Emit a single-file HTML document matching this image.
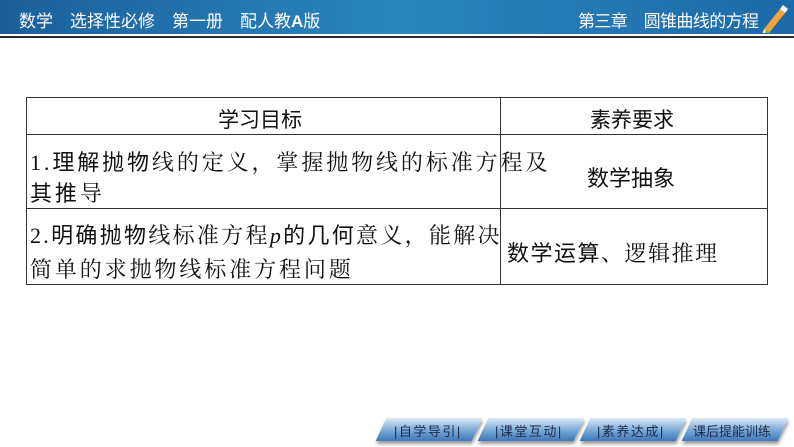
<!DOCTYPE html>
<html><head><meta charset="utf-8"><style>
*{margin:0;padding:0;box-sizing:border-box}
body{width:794px;height:447px;background:#fff;position:relative;overflow:hidden;font-family:"Liberation Serif","Noto Serif CJK SC",serif;color:#111}
.bar{position:absolute;left:0;top:0;width:794px;height:34px;background:linear-gradient(90deg,#1a5f9c,#2a86bf 50%,#1c6aa8)}
.l2{position:absolute;left:0;top:36px;width:794px;height:2px;background:#2a2a2a}
.ht{position:absolute;top:7px;color:#fff;font-family:"Liberation Sans","Noto Sans CJK SC",sans-serif;font-size:17px;white-space:nowrap}
.t{position:absolute;white-space:nowrap}
.s{font-family:"Liberation Sans","Noto Sans CJK SC",sans-serif;font-weight:normal}
.h{position:absolute;background:#333}
.btn{position:absolute;top:418px;height:23px;width:96px;transform:skewX(-25deg);background:linear-gradient(#dbe9f6,#6fa2d3 60%,#3d78b8);box-shadow:2px 3px 3px #999}
.bt{position:absolute;top:421px;font-family:"Liberation Sans","Noto Sans CJK SC",sans-serif;font-size:13px;color:#1a2a4a;white-space:nowrap;letter-spacing:1.5px}
</style></head><body>
<div class="bar"></div><div class="l2"></div>
<div class="ht" style="left:19px">数学　选择性必修　第一册　配人教<b>A</b>版</div>
<div class="ht" style="left:578px;letter-spacing:-0.6px">第三章　圆锥曲线的方程</div>
<svg style="position:absolute;left:760px;top:3px" width="28" height="30" viewBox="0 0 28 30">
<path d="M4 26 L20 6 L25 10 L9 30 Z" fill="#f2a33a"/><path d="M20 6 L23 2 L28 6 L25 10Z" fill="#fff"/><path d="M4 26 L9 30 L2 31Z" fill="#f5e3c0"/><path d="M6 28 L9 30" stroke="#7ab648" stroke-width="3"/></svg>
<div class="h" style="left:26px;top:97px;width:742px;height:1px"></div>
<div class="h" style="left:26px;top:134px;width:742px;height:1px"></div>
<div class="h" style="left:26px;top:208px;width:742px;height:1px"></div>
<div class="h" style="left:26px;top:284px;width:742px;height:1px"></div>
<div class="h" style="left:26px;top:97px;width:1px;height:188px"></div>
<div class="h" style="left:500px;top:97px;width:1px;height:188px"></div>
<div class="h" style="left:767px;top:97px;width:1px;height:188px"></div>
<div class="t s" style="left:218px;top:104px;font-size:21px">学习目标</div>
<div class="t s" style="left:590px;top:104px;font-size:21px">素养要求</div>
<div class="t" style="left:30px;top:145px;font-size:22px;letter-spacing:2.9px">1.<span class="s">理解抛物</span>线的定义，掌握抛物线的标准方程及</div>
<div class="t" style="left:30px;top:176px;font-size:22px;letter-spacing:2.9px"><span class="s">其推</span>导</div>
<div class="t s" style="left:587px;top:161px;font-size:22px">数学抽象</div>
<div class="t" style="left:30px;top:218px;font-size:22px;letter-spacing:2.3px">2.<span class="s">明确抛物</span>线标准方程<i>p</i><span class="s">的几何</span>意义，能解决</div>
<div class="t" style="left:30px;top:253px;font-size:22px;letter-spacing:2.9px">简单的求抛物线标准方程问题</div>
<div class="t" style="left:507px;top:236px;font-size:22px;letter-spacing:1.5px"><span class="s">数学运算</span>、逻辑推理</div>
<div class="btn" style="left:381px"></div><div class="btn" style="left:483px"></div>
<div class="btn" style="left:585px"></div><div class="btn" style="left:687px"></div>
<div class="bt" style="left:394px">|自学导引|</div>
<div class="bt" style="left:495px">|课堂互动|</div>
<div class="bt" style="left:597px">|素养达成|</div>
<div class="bt" style="left:693px;letter-spacing:0">课后提能训练</div>
</body></html>
